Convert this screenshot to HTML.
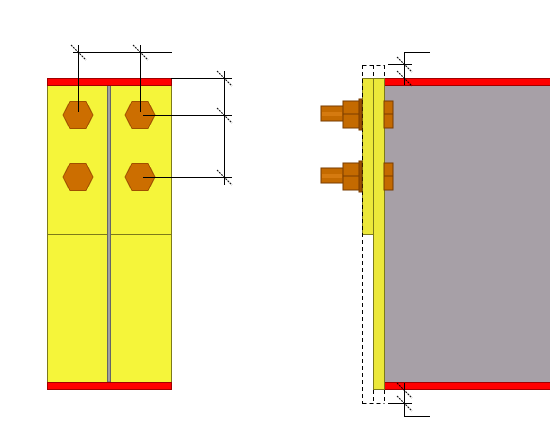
<!DOCTYPE html>
<html><head><meta charset="utf-8"><style>html,body{margin:0;padding:0;background:#fff;}svg{display:block}</style></head>
<body>
<svg width="550" height="425" viewBox="0 0 550 425" xmlns="http://www.w3.org/2000/svg" shape-rendering="crispEdges">
<defs>
<g id="tick"><line x1="-7" y1="-7" x2="8" y2="8" stroke="#000" stroke-width="1" stroke-dasharray="2,1" shape-rendering="auto"/></g>
<polygon id="hex" points="-15,0 -8,-13.5 8,-13.5 15,0 8,13.5 -8,13.5" fill="#cc6e00" stroke="#a05000" stroke-width="1"/>
<g id="bolt">
 <rect x="321" y="-8" width="22" height="15" fill="#c46a00" stroke="#7a3c00"/>
 <rect x="322" y="-2" width="20" height="4" fill="#d57a10"/>
 <rect x="343" y="-13" width="17" height="27" fill="#c46a00" stroke="#7a3c00"/>
 <line x1="343" y1="0" x2="360" y2="0" stroke="#7a3c00"/>
 <rect x="359" y="-15" width="3" height="31" fill="#9a4e00" stroke="#7a3c00"/>
 <rect x="384" y="-13" width="9" height="27" fill="#c46a00" stroke="#7a3c00"/>
 <line x1="384" y1="0" x2="393" y2="0" stroke="#7a3c00"/>
</g>
</defs>
<rect x="47.5" y="85.5" width="124" height="297" fill="#f5f53a" stroke="#7d7a1a"/>
<line x1="47" y1="234.5" x2="171" y2="234.5" stroke="#7d7a1a"/>
<rect x="107.5" y="85" width="3" height="297" fill="#a0a0a0" stroke="#666"/>
<rect x="47.5" y="78.5" width="124" height="7" fill="#ff0000" stroke="#a00000"/>
<rect x="47.5" y="382.5" width="124" height="7" fill="#ff0000" stroke="#a00000"/>
<use href="#hex" x="78" y="115"/><use href="#hex" x="140" y="115"/>
<use href="#hex" x="78" y="177"/><use href="#hex" x="140" y="177"/>
<g stroke="#000" stroke-width="1">
<line x1="73" y1="52.5" x2="172" y2="52.5"/>
<line x1="78.5" y1="45" x2="78.5" y2="112"/>
<line x1="140.5" y1="45" x2="140.5" y2="112"/>
<line x1="224.5" y1="71" x2="224.5" y2="185"/>
<line x1="171" y1="78.5" x2="232" y2="78.5"/>
<line x1="143" y1="115.5" x2="232" y2="115.5"/>
<line x1="143" y1="177.5" x2="232" y2="177.5"/>
</g>
<use href="#tick" x="78" y="52"/><use href="#tick" x="140" y="52"/>
<use href="#tick" x="224" y="78"/><use href="#tick" x="224" y="115"/><use href="#tick" x="224" y="177"/>
<rect x="384" y="85" width="166" height="297" fill="#a7a0a7"/>
<rect x="384" y="78.5" width="170" height="7" fill="#ff0000" stroke="#a00000"/>
<rect x="384" y="382.5" width="170" height="7" fill="#ff0000" stroke="#a00000"/>
<rect x="362.5" y="78.5" width="11" height="156" fill="#ece83a" stroke="#7d7a1a"/>
<rect x="373.5" y="78.5" width="11" height="311" fill="#ece83a" stroke="#7d7a1a"/>
<g fill="none" stroke="#000" stroke-dasharray="4,3">
<path d="M362.5 65.5 H384.5 M362.5 403.5 H384.5 M362.5 65 V404 M384.5 65 V78 M384.5 390 V404 M373.5 65 V78 M373.5 390 V404"/>
</g>
<use href="#bolt" y="114"/><use href="#bolt" y="176"/>
<g stroke="#000" stroke-width="1">
<line x1="404.5" y1="52" x2="404.5" y2="85"/>
<line x1="404" y1="52.5" x2="430" y2="52.5"/>
<line x1="388" y1="64.5" x2="412" y2="64.5"/>
<line x1="404.5" y1="383" x2="404.5" y2="416"/>
<line x1="404" y1="416.5" x2="430" y2="416.5"/>
<line x1="388" y1="403.5" x2="412" y2="403.5"/>
</g>
<use href="#tick" x="404" y="64"/><use href="#tick" x="404" y="78"/>
<use href="#tick" x="404" y="390"/><use href="#tick" x="404" y="403"/>
</svg>
</body></html>
